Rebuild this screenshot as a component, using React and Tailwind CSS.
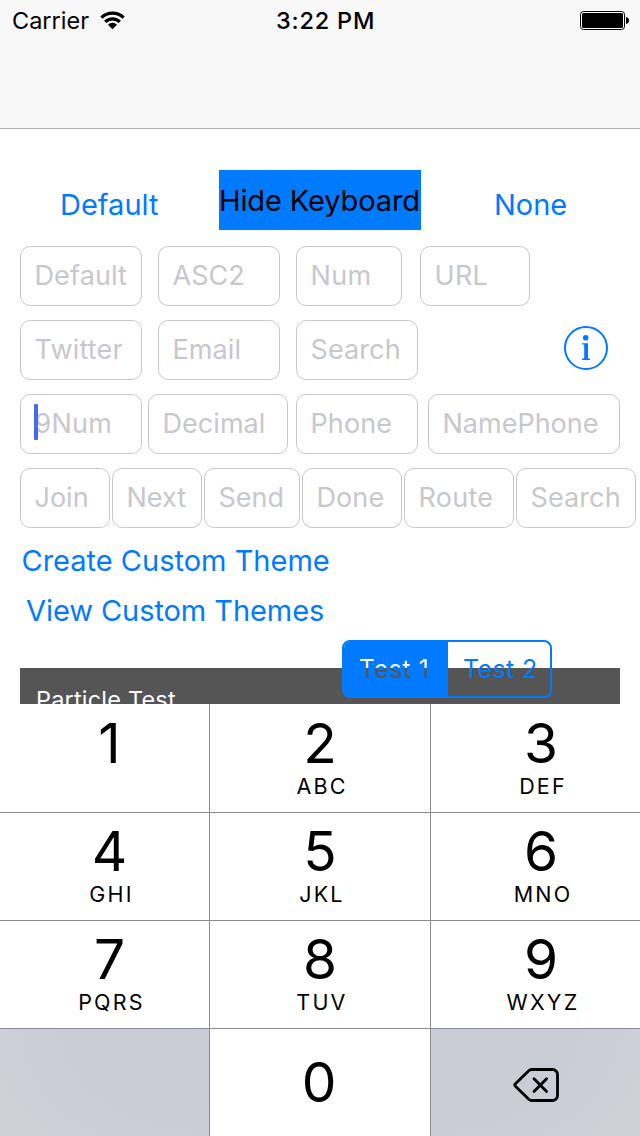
function Field({ className, text, focused = false }) {
  return (
    <div
      className={`relative flex h-[60px] shrink-0 items-center rounded-[10px] border border-[#c9c9c9] bg-white pb-px pl-[13.5px] text-[27px] leading-none whitespace-nowrap text-[#c7c7cd] ${className}`}
    >
      {text}
      {focused && (
        <span className="absolute top-[9px] left-[13px] h-9 w-1 rounded-[1px] bg-[#426bf2]" />
      )}
    </div>
  );
}

function StatusBar() {
  return (
    <header className="h-[129px] shrink-0 border-b border-[#b2b2b2] bg-[#f8f8f8]">
      <div className="grid h-[41px] grid-cols-[265px_1fr_265px] items-center text-[23.5px] leading-none whitespace-nowrap text-black">
        <div className="flex items-center gap-[11px] pl-3">
          <span>Carrier</span>
          <svg className="mt-[-1px]" width="25" height="19" viewBox="0 0 25 19" fill="none" stroke="#000" strokeWidth="3.200">
            <path d="M1.400 6.700a15.800 15.800 0 0 1 22.200 0" />
            <path d="M5.200 10.900a10.300 10.300 0 0 1 14.600 0" />
            <path d="M12.500 18.300L8 13.700a6.400 6.400 0 0 1 9 0z" fill="#000" stroke="none" />
          </svg>
        </div>
        <span className="pl-[11px] font-medium tracking-[0.8px]">3:22 PM</span>
        <div className="flex justify-end pr-[11px]">
          <svg width="49" height="19" viewBox="0 0 49 19">
            <rect x="0.5" y="0.5" width="44" height="18" rx="3" fill="#fff" stroke="#000" />
            <rect x="2" y="2" width="41" height="15" rx="1.5" fill="#000" />
            <path d="M46 6c2 .3 3 1.700 3 3.500s-1 3.200-3 3.500z" fill="#000" />
          </svg>
        </div>
      </div>
    </header>
  );
}

function InfoIcon() {
  return (
    <svg width="44" height="44" viewBox="0 0 44 44" fill="#007aff">
      <circle cx="22" cy="22" r="21" fill="none" stroke="#007aff" strokeWidth="2" />
      <circle cx="21.700" cy="11.800" r="2.800" />
      <path d="M18.100 17.200H24v15.400h2V34h-8v-1.400h2.200V18.600h-2.100z" />
    </svg>
  );
}

function Key({ digit, letters, column, row = "" }) {
  const pad = column === 0 ? "pl-[10px] border-r" : column === 1 ? "border-r" : "pl-[11px]";
  return (
    <div className={`flex flex-col items-center border-[#8c8c8c] bg-white text-black ${pad} ${row}`}>
      <span className="text-[55px] leading-[60px]">{digit}</span>
      {letters && <span className="pl-1 text-[21.5px] leading-[26px] tracking-[2.2px]">{letters}</span>}
    </div>
  );
}

function Keypad() {
  return (
    <section className="grid h-[432px] shrink-0 grid-cols-[210px_221px_209px] grid-rows-[109px_108px_108px_107px]">
      <Key digit="1" column={0} row="border-b pt-[9px]" />
      <Key digit="2" letters="ABC" column={1} row="border-b pt-[9px]" />
      <Key digit="3" letters="DEF" column={2} row="border-b pt-[9px]" />
      <Key digit="4" letters="GHI" column={0} row="border-b pt-2" />
      <Key digit="5" letters="JKL" column={1} row="border-b pt-2" />
      <Key digit="6" letters="MNO" column={2} row="border-b pt-2" />
      <Key digit="7" letters="PQRS" column={0} row="border-b pt-2" />
      <Key digit="8" letters="TUV" column={1} row="border-b pt-2" />
      <Key digit="9" letters="WXYZ" column={2} row="border-b pt-2" />
      <div className="border-r border-[#8c8c8c] bg-[radial-gradient(230px_160px_at_top_right,#cacbd4_0%,#cbced7_80%,#cdd0d8_94%,#ced1d4_102%,#cdd1d9_112%)]" />
      <Key digit="0" column={1} row="pt-[23px] pr-[2px]" />
      <div className="flex items-center justify-center bg-[radial-gradient(230px_160px_at_top_left,#cacbd4_0%,#cbced7_80%,#cdd0d8_94%,#ced1d4_102%,#cdd1d9_112%)] pt-[5px] pl-[2px]">
        <svg width="47" height="36" viewBox="0 0 47 36" fill="none" stroke="#000" strokeWidth="2.800" strokeLinejoin="round" strokeLinecap="round">
          <path d="M18.500 2.500H39.500a5 5 0 0 1 5 5v21a5 5 0 0 1-5 5H18.500a4 4 0 0 1-2.500-1L2.400 19.200a1.700 1.700 0 0 1 0-2.400L16 3.500a4 4 0 0 1 2.500-1z" />
          <path d="M21 11.800l12.600 12.600M33.600 11.800L21 24.400" />
        </svg>
      </div>
    </section>
  );
}

export default function App() {
  return (
    <main className="flex h-[1136px] w-[640px] flex-col overflow-hidden bg-white font-[Inter,sans-serif]">
      <StatusBar />

      <div className="flex h-[575px] shrink-0 flex-col overflow-hidden pt-[41px]">
        <div className="flex h-[60px] items-center text-[29px] leading-none whitespace-nowrap text-[#007aff]">
          <span className="w-[219px] pt-2 pl-[60px]">Default</span>
          <span className="flex h-[60px] w-[202px] items-center bg-[#007aff] pt-px tracking-[-0.12px] text-black">Hide Keyboard</span>
          <span className="pt-2 pl-[73px]">None</span>
        </div>

        <div className="mt-4 flex flex-col gap-3.5 pl-5">
          <div className="flex">
            <Field className="w-[122px] tracking-[0.12px]" text="Default" />
            <Field className="ml-4 w-[122px]" text="ASC2" />
            <Field className="ml-4 w-[106px] tracking-[0.4px]" text="Num" />
            <Field className="ml-[18px] w-[110px] tracking-[0.3px]" text="URL" />
          </div>
          <div className="flex">
            <Field className="w-[122px] tracking-[0.19px]" text="Twitter" />
            <Field className="ml-4 w-[122px] tracking-[0.1px]" text="Email" />
            <Field className="ml-4 w-[122px] tracking-[0.1px]" text="Search" />
            <button className="ml-[146px] h-[44px] w-[44px] pt-1.5">
              <InfoIcon />
            </button>
          </div>
          <div className="flex">
            <Field className="w-[122px] tracking-[0.2px]" text="9Num" focused />
            <Field className="ml-1.5 w-[140px] tracking-[0.05px]" text="Decimal" />
            <Field className="ml-2 w-[122px] tracking-[0.1px]" text="Phone" />
            <Field className="ml-2.5 w-[192px]" text="NamePhone" />
          </div>
          <div className="flex gap-0.5">
            <Field className="w-[90px]" text="Join" />
            <Field className="w-[90px]" text="Next" />
            <Field className="w-[96px]" text="Send" />
            <Field className="w-[100px] tracking-[0.1px]" text="Done" />
            <Field className="w-[110px] tracking-[0.25px]" text="Route" />
            <Field className="w-[120px] tracking-[0.1px]" text="Search" />
          </div>
        </div>

        <div className="mt-2 flex flex-col text-[29px] leading-[50px] whitespace-nowrap text-[#007aff]">
          <span className="pl-[21.5px]">Create Custom Theme</span>
          <span className="pl-[26px] tracking-[-0.07px]">View Custom Themes</span>
        </div>

        <div className="relative mx-5 mt-8 h-9 shrink-0 bg-[#555]">
          <div className="h-9 overflow-hidden pl-4 text-[23.5px] leading-[64px] tracking-[0.19px] text-white">
            Particle Test
          </div>
          <div className="absolute -top-7 left-[322px] flex h-[58px] w-[210px] overflow-hidden rounded-lg border-2 border-[#007aff] text-[25px] leading-[54px] whitespace-nowrap">
            <div className="w-[104px] bg-[#007aff] pl-[15px] tracking-[0.5px]">
              <span className="block bg-[linear-gradient(#fff_26px,#555_26px)] bg-clip-text text-transparent">Test 1</span>
            </div>
            <div className="pl-[15px] tracking-[0.35px] text-[#007aff]">Test 2</div>
          </div>
        </div>
      </div>

      <Keypad />
    </main>
  );
}
